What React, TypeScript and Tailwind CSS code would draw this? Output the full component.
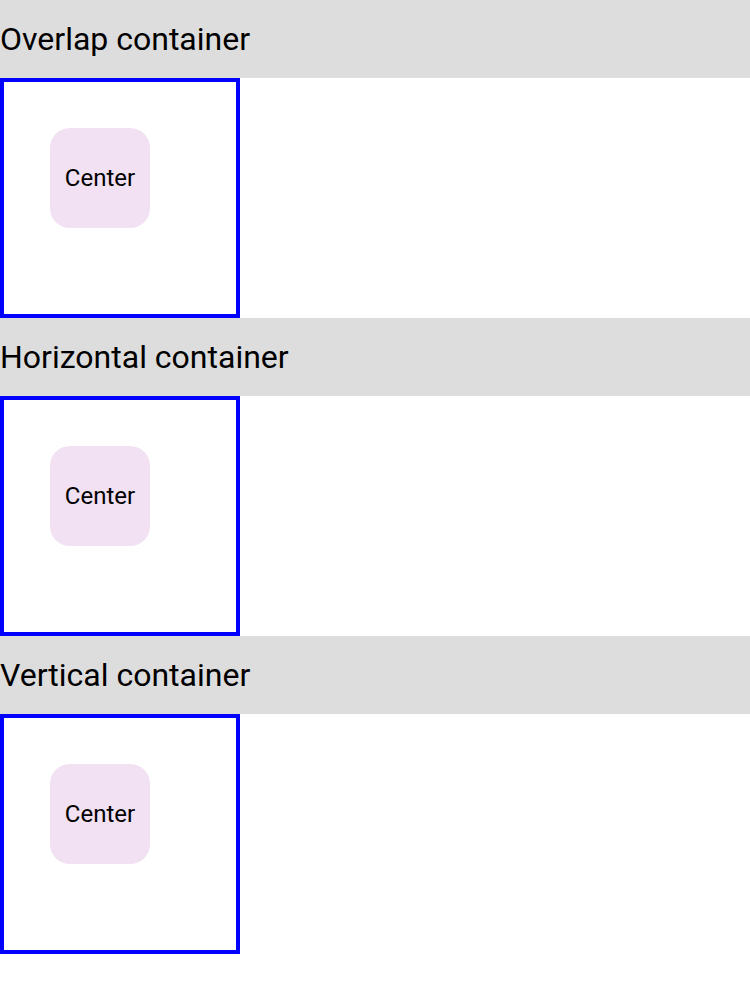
export default function App() {
  const sections = ["Overlap container", "Horizontal container", "Vertical container"];
  return (
    <div className="flex flex-col bg-white" style={{ fontFamily: "Roboto, sans-serif" }}>
      {sections.map((s) => (
        <div key={s} className="flex flex-col">
          <div className="h-[78px] bg-[#dddddd] flex items-center text-[32px] text-black leading-none">
            {s}
          </div>
          <div className="w-[240px] h-[240px] border-4 border-[#0000ff] p-[46px]">
            <div className="w-[100px] h-[100px] rounded-[20px] bg-[#f1e1f2] flex items-center justify-center text-[24px] text-black">
              Center
            </div>
          </div>
        </div>
      ))}
    </div>
  );
}
